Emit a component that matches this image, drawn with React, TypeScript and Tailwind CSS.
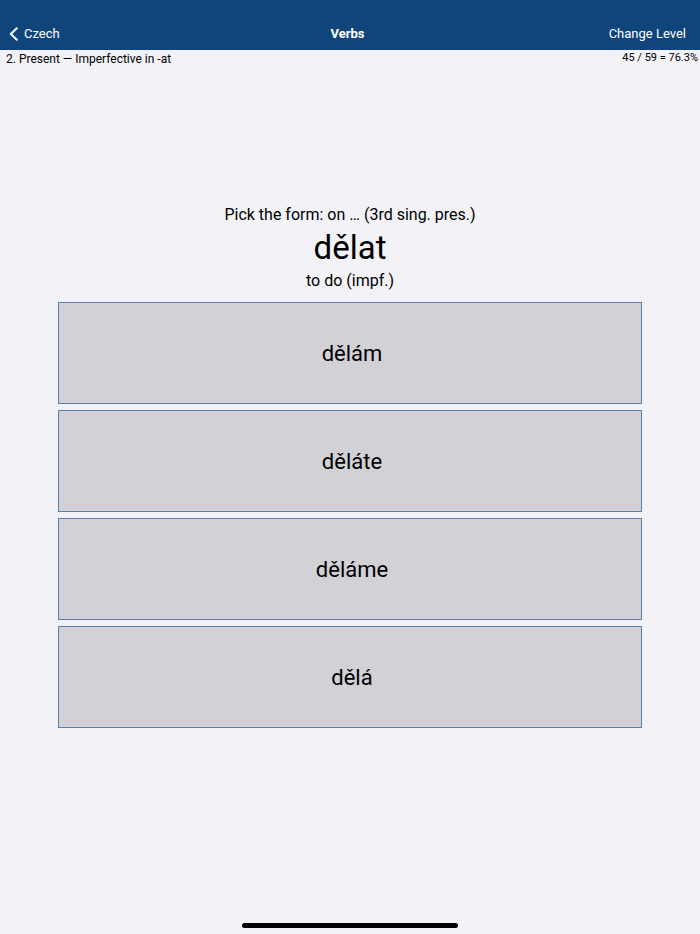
import React from 'react';

const options = ['dělám', 'děláte', 'děláme', 'dělá'];

export default function App() {
  return (
    <div
      className="w-[700px] h-[934px] bg-[#f2f2f7] flex flex-col relative overflow-hidden"
      style={{ fontFamily: 'Roboto, "Liberation Sans", sans-serif' }}
    >
      {/* Nav bar */}
      <div className="h-[50px] bg-[#10457c] flex items-end pb-[8px] px-[9px] text-white text-[13px] leading-[16px]">
        <div className="flex-1 flex items-center gap-[4px]">
          <svg width="10" height="14" viewBox="0 0 10 14" fill="none">
            <path d="M7.8 1.2 L1.8 7 L7.8 12.8" stroke="white" strokeWidth="2" strokeLinecap="round" strokeLinejoin="round" />
          </svg>
          <span className="ml-[1px]">Czech</span>
        </div>
        <div className="flex-1 text-center font-bold">Verbs</div>
        <div className="flex-1 text-right pr-[5px]">Change Level</div>
      </div>

      {/* Status row */}
      <div className="flex justify-between items-center h-[16px] px-[6px] pr-[2px] text-[12px] text-black pt-[1px]">
        <span>2. Present — Imperfective in -at</span>
        <span className="text-[11px]">45 / 59 = 76.3%</span>
      </div>

      {/* Question */}
      <div className="flex flex-col items-center mt-[138px]">
        <div className="text-[16px] leading-[22px] text-black">Pick the form: on … (3rd sing. pres.)</div>
        <div className="text-[33px] leading-[44px] text-black">dělat</div>
        <div className="text-[16px] leading-[22px] text-black">to do (impf.)</div>
      </div>

      {/* Options */}
      <div className="flex flex-col gap-[6px] mx-[58px] mt-[10px]">
        {options.map((o) => (
          <button
            key={o}
            type="button"
            className="h-[102px] w-full bg-[#d1d1d6] border border-[#5b7fb0] flex items-center justify-center text-[22px] text-black pl-[4px]"
          >
            {o}
          </button>
        ))}
      </div>

      {/* Home indicator */}
      <div className="absolute bottom-[6px] left-[242px] w-[216px] h-[5px] rounded-full bg-black" />
    </div>
  );
}
